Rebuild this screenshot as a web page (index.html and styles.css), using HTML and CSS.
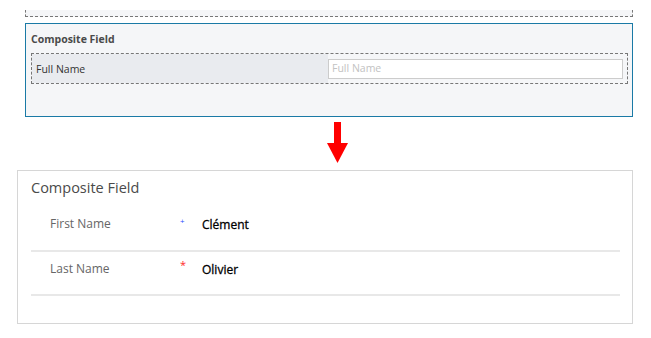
FILE: index.html
```html
<!DOCTYPE html>
<html lang="en">
  <head>
    <meta charset="UTF-8" />
    <title>Composite Field</title>
    <link rel="stylesheet" href="styles.css">
  </head>
  <body>
    <div class="designer">
      <div class="prev-section"></div>
      <div class="section selected">
        <div class="section-title">Composite Field</div>
        <div class="field-cell">
          <div class="field-label">Full Name</div>
          <div class="field-input">Full Name</div>
        </div>
      </div>
    </div>

    <div class="arrow">
      <svg width="22" height="42" viewBox="0 0 22 42">
        <rect x="7" y="0" width="7" height="22" fill="#ff0000" />
        <polygon points="0,21 21,21 10.5,41" fill="#ff0000" />
      </svg>
    </div>

    <div class="card">
      <div class="card-title">Composite Field</div>
      <div class="row">
        <div class="row-label">First Name</div>
        <div class="row-req recommended">+</div>
        <div class="row-value">Clément</div>
      </div>
      <div class="row">
        <div class="row-label">Last Name</div>
        <div class="row-req required">*</div>
        <div class="row-value">Olivier</div>
      </div>
    </div>
  </body>
</html>
```

FILE: styles.css
```css
body {
  margin: 0;
  background: #ffffff;
  font-family: "Open Sans", "Noto Sans", sans-serif;
  color: #333;
}

/* form designer (before) */
.designer {
  width: 608px;
  margin: 10px 0 0 25px;
}

.prev-section {
  height: 6px;
  background: #f5f6f8;
  border: 1px dashed #777;
  border-top: none;
  margin-bottom: 6px;
}

.section {
  height: 92px;
  background: #f5f6f8;
  border: 1px solid #1a7aa6;
  padding: 0 4px 0 5px;
}

.section-title {
  font-size: 10.5px;
  font-weight: 700;
  line-height: 14px;
  color: #4a4a4a;
  padding-top: 8px;
  margin-bottom: 7px;
}

.field-cell {
  display: flex;
  align-items: center;
  height: 29px;
  border: 1px dashed #777;
  background: #f5f6f8;
}

.field-label {
  align-self: stretch;
  width: 292px;
  padding-left: 4px;
  display: flex;
  align-items: center;
  background: #e9ebef;
  font-size: 10.5px;
  color: #333;
}

.field-input {
  flex: 1;
  height: 18px;
  margin-right: 4px;
  padding-left: 3px;
  background: #fff;
  border: 1px solid #ccc;
  font-size: 10.5px;
  line-height: 17px;
  color: #c2c2c2;
}

/* arrow */
.arrow {
  margin: 5px 0 0 327px;
  height: 42px;
}

.arrow svg {
  display: block;
}

/* rendered form (after) */
.card {
  width: 589px;
  margin: 6px 0 0 17px;
  border: 1px solid #d6d6d6;
  padding: 7px 12px 27px 13px;
}

.card-title {
  font-size: 14.5px;
  line-height: 20px;
  color: #4a4a4a;
  margin-bottom: 8px;
}

.row {
  display: flex;
  align-items: baseline;
  padding: 8px 0 15px 19px;
  border-bottom: 2px solid #e8e8e8;
}

.row + .row {
  padding-top: 7px;
}

.row-label {
  width: 130px;
  font-size: 12px;
  line-height: 20px;
  color: #666;
}

.row-req {
  width: 22px;
  font-size: 11px;
  line-height: 20px;
  position: relative;
  top: -4px;
}

.recommended {
  color: #2b4cff;
  font-size: 8px;
}

.required {
  color: #ff2a2a;
}

.row-value {
  font-size: 12px;
  font-weight: 400;
  line-height: 20px;
  color: #000;
  -webkit-text-stroke: 0.3px #000;
  position: relative;
  top: 1px;
}
```
